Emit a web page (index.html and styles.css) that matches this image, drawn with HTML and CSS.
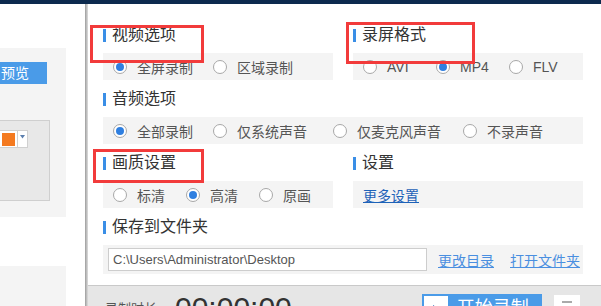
FILE: index.html
```html
<!DOCTYPE html>
<html lang="zh-CN">
<head>
<meta charset="utf-8">
<title>录屏设置</title>
<link rel="stylesheet" href="styles.css">
</head>
<body>
<div class="topbar"></div>
<div class="app">
  <aside class="side">
    <div class="side-panel">
      <div class="preview-btn">预览</div>
      <div class="color-box">
        <div class="picker">
          <span class="swatch-frame"><span class="swatch"></span></span>
          <span class="dd"><svg width="5" height="4" viewBox="0 0 5 4"><path d="M0 0H5L2.5 3.5Z" fill="#5b7fae"/></svg></span>
        </div>
      </div>
    </div>
    <div class="side-panel2"></div>
  </aside>
  <div class="divider"></div>
  <main class="main">
    <div class="content">
      <div class="grid">
        <section class="sec">
          <h3 class="title">视频选项</h3>
          <div class="row">
            <label class="opt w100"><span class="radio on"></span>全屏录制</label>
            <label class="opt"><span class="radio"></span>区域录制</label>
          </div>
        </section>
        <section class="sec">
          <h3 class="title">录屏格式</h3>
          <div class="row">
            <label class="opt w73"><span class="radio"></span>AVI</label>
            <label class="opt w73"><span class="radio on"></span>MP4</label>
            <label class="opt"><span class="radio"></span>FLV</label>
          </div>
        </section>
        <section class="sec span">
          <h3 class="title">音频选项</h3>
          <div class="row">
            <label class="opt w100"><span class="radio on"></span>全部录制</label>
            <label class="opt w120"><span class="radio"></span>仅系统声音</label>
            <label class="opt w130"><span class="radio"></span>仅麦克风声音</label>
            <label class="opt"><span class="radio"></span>不录声音</label>
          </div>
        </section>
        <section class="sec">
          <h3 class="title">画质设置</h3>
          <div class="row">
            <label class="opt w73"><span class="radio"></span>标清</label>
            <label class="opt w73"><span class="radio on"></span>高清</label>
            <label class="opt"><span class="radio"></span>原画</label>
          </div>
        </section>
        <section class="sec">
          <h3 class="title">设置</h3>
          <div class="row">
            <a class="link dark">更多设置</a>
          </div>
        </section>
        <section class="sec span">
          <h3 class="title">保存到文件夹</h3>
          <div class="row save">
            <div class="path">C:\Users\Administrator\Desktop</div>
            <a class="link">更改目录</a>
            <a class="link">打开文件夹</a>
          </div>
        </section>
      </div>
    </div>
    <div class="bottom">
      <span class="dur-label">录制时长</span>
      <span class="timer">00:00:00</span>
      <button class="start"><span class="play"><svg width="10" height="12" viewBox="0 0 10 12"><path d="M2 2L8 6L2 10Z" fill="#2f6fb8"/></svg></span>开始录制</button>
      <span class="more"><span class="more-mark"></span></span>
    </div>
  </main>
</div>
<div class="mark m1"></div>
<div class="mark m2"></div>
<div class="mark m3"></div>
</body>
</html>
```
FILE: styles.css
```css
* { box-sizing: border-box; }
html, body { margin: 0; padding: 0; }
body {
  width: 601px;
  height: 306px;
  overflow: hidden;
  background: #fff;
  font-family: "Liberation Sans", "Noto Sans CJK SC", sans-serif;
  color: #333;
  position: relative;
}
.topbar { height: 4px; background: #0d2a4e; }
.app { display: flex; height: 302px; }

.side { width: 85px; flex: none; padding-top: 44px; }
.side-panel {
  width: 66px; height: 169px; background: #f4f4f4;
  padding-top: 14px;
}
.preview-btn {
  width: 47px; height: 22px; background: #4a9be8;
  color: #fff; font-size: 14px; line-height: 22px; padding-left: 1px;
}
.color-box {
  margin-top: 36px; width: 50px; height: 81px;
  background: #e8e8e8; border: 1px solid #cfcfcf; border-left: none;
  padding-top: 9px;
}
.picker { display: flex; height: 18px; width: 28px; }
.swatch-frame {
  width: 18px; height: 18px; background: #fff;
  border: 1px solid #d0d0d0; border-left: none;
  display: flex; align-items: center; padding-left: 2px;
}
.swatch { width: 13px; height: 13px; background: #f47a20; }
.dd {
  width: 10px; height: 18px; background: #fff;
  border: 1px solid #d0d0d0; border-left: none;
  display: flex; justify-content: center; padding-top: 4px;
}
.dd svg { display: block; }
.side-panel2 { width: 66px; height: 40px; margin-top: 49px; background: #f4f4f4; }

.divider {
  width: 3px; flex: none;
  background: linear-gradient(to right, #9c9c9c, #c4c4c4 60%, #dedede);
}
.main { flex: 1; display: flex; flex-direction: column; min-width: 0; }
.content { height: 281px; padding: 21px 0 0 15px; flex: none; }
.grid {
  display: grid;
  grid-template-columns: 230px 230px;
  column-gap: 20px;
  row-gap: 9px;
}
.span { grid-column: 1 / -1; }
.title {
  margin: 0 0 8px;
  display: flex; align-items: center; gap: 6px;
  font-size: 16px; line-height: 20px; height: 20px; font-weight: normal;
  color: #333;
}
.title::before { content: ""; width: 3px; height: 13px; background: #3a8ee6; }
.row {
  height: 27px; background: #f4f4f4;
  display: flex; align-items: center; padding-left: 10px;
  font-size: 14px; color: #555;
}
.opt { display: flex; align-items: center; white-space: nowrap; }
.w73 { width: 73px; }
.w100 { width: 100px; }
.w120 { width: 120px; }
.w130 { width: 130px; }
.radio {
  width: 14px; height: 14px; border-radius: 50%;
  border: 1px solid #a8a8a8; background: #fff;
  margin-right: 10px; flex: none;
  display: flex; align-items: center; justify-content: center;
}
.radio.on::after {
  content: ""; width: 8px; height: 8px; border-radius: 50%; background: #2f7fe0;
}
.link { font-size: 14px; color: #4a8fe0; text-decoration: underline; cursor: pointer; }
.link.dark { color: #1d62b8; }
.save { height: 29px; padding-left: 5px; }
.path {
  width: 319px; height: 23px; background: #fff; border: 1px solid #cdcdcd;
  font-size: 13px; line-height: 21px; padding-left: 4px; color: #555;
  margin-right: 11px;
}
.save .link + .link { margin-left: 16px; }

.bottom {
  flex: 1; background: #e6e6e6; border-top: 1px solid #c9c9c9;
  display: flex; align-items: flex-start; padding-left: 17px;
}
.dur-label { font-size: 13px; line-height: 18px; color: #555; margin-top: 14px; width: 70px; }
.timer { font-size: 30px; line-height: 30px; color: #333; margin-top: 7px; }
.start {
  margin: 8px 0 0 130px;
  width: 120px; height: 30px; border: none; padding: 2px;
  background: #4a9be8; color: #fff; font-family: inherit;
  font-size: 18px; line-height: 24px;
  display: flex; align-items: flex-start; gap: 9px;
}
.play {
  width: 24px; height: 26px; background: #fff;
  display: flex; align-items: center; justify-content: center;
}
.more {
  margin: 9px 0 0 12px; width: 26px; height: 26px; background: #fff;
  display: flex; justify-content: center; padding-top: 6px;
}
.more-mark { width: 10px; height: 2px; background: #aaa; }

.mark { position: absolute; border: 3px solid #f23b3b; }
.m1 { left: 90px; top: 25px; width: 114px; height: 38px; }
.m2 { left: 346px; top: 22px; width: 129px; height: 42px; }
.m3 { left: 93px; top: 149px; width: 111px; height: 34px; }
```
